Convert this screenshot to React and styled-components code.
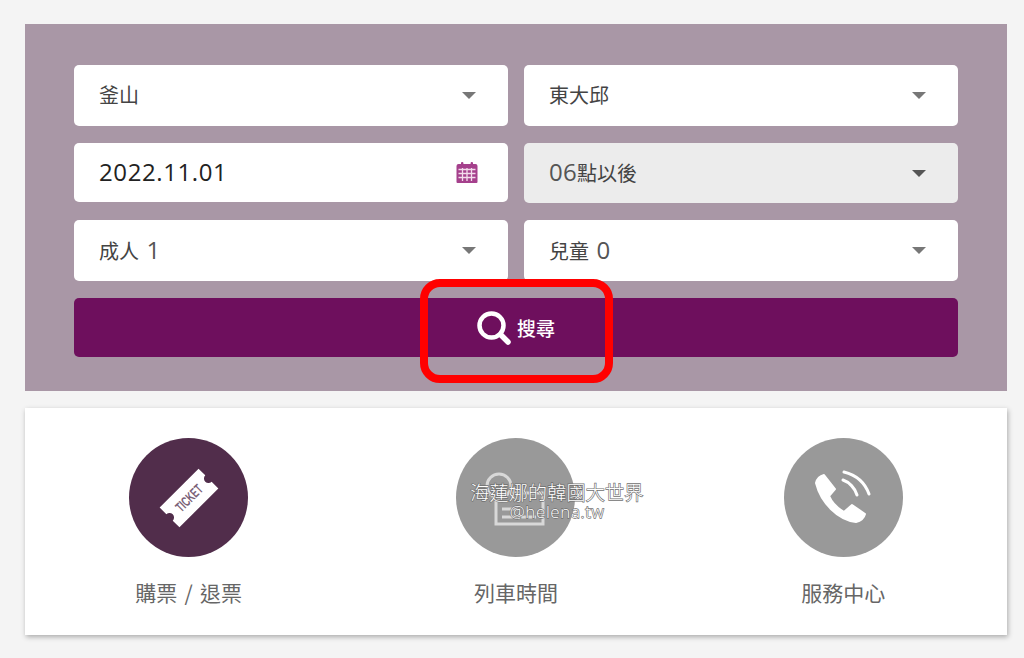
import styled, { createGlobalStyle } from 'styled-components';

const GlobalStyle = createGlobalStyle`
  html, body {
    margin: 0;
    background: #f4f4f4;
    font-family: "Noto Sans CJK TC", sans-serif;
  }
`;

const rows = [
  [{ label: '釜山' }, { label: '東大邱' }],
  [{ label: '2022.11.01', date: true }, { label: '06點以後', disabled: true }],
  [{ label: '成人 1' }, { label: '兒童 0' }],
];

const menu = [
  { label: '購票 / 退票', active: true, icon: <TicketIcon /> },
  { label: '列車時間', icon: <TimetableIcon /> },
  { label: '服務中心', icon: <PhoneIcon /> },
];

function TicketIcon() {
  return (
    <svg width="74" height="74" viewBox="0 0 74 74">
      <g transform="rotate(-45 37 37)">
        <path
          d="M9.5 23h55v9.5a4.5 4.5 0 0 0 0 9V51h-55v-9.500a4.500 4.500 0 0 0 0-9z"
          fill="#fff"
        />
        <text
          x="37"
          y="42"
          textAnchor="middle"
          fontSize="14"
          fontWeight="700"
          fontFamily="Liberation Sans"
          fill="#7a6277"
          textLength="32"
          lengthAdjust="spacingAndGlyphs"
        >
          TICKET
        </text>
      </g>
    </svg>
  );
}

function TimetableIcon() {
  return (
    <svg width="84" height="84" viewBox="0 0 84 84" fill="none" stroke="#d8d8d8" strokeWidth="3">
      <circle cx="25" cy="30" r="12" />
      <path d="M38 37h31v31H22V45" />
      <path d="M28 53h16M28 61h34" />
    </svg>
  );
}

function PhoneIcon() {
  return (
    <svg width="58" height="58" viewBox="0 0 58 58" fill="none" stroke="#fff">
      <path
        d="M2 14C3 10 6 7 10 6L21 20L15 27C18 34 23 39 30 43L38 36L51 45C50 49 46 52 42 53C24 51 7 34 2 14Z"
        fill="#fff"
        strokeWidth="2"
        strokeLinejoin="round"
      />
      <path d="M29 11C35 13 41 19 43 26" strokeWidth="3" strokeLinecap="round" />
      <path d="M30 3C42 6 51 14 55 25" strokeWidth="3" strokeLinecap="round" />
    </svg>
  );
}

function SearchIcon() {
  return (
    <svg width="34" height="34" viewBox="0 0 34 34" fill="none" stroke="#fff">
      <circle cx="14.500" cy="14.500" r="12" strokeWidth="4.500" />
      <path d="M23.500 23.500l7.500 7.500" strokeWidth="5.500" strokeLinecap="round" />
    </svg>
  );
}

function CalendarIcon() {
  return (
    <svg width="22" height="21" viewBox="0 0 22 21">
      <path d="M0.500 4a2 2 0 0 1 2-2h17a2 2 0 0 1 2 2v16a1 1 0 0 1-1 1H1.500a1 1 0 0 1-1-1z" fill="#a5408c" />
      <rect x="5" y="0" width="2.400" height="4.500" rx="1" fill="#a5408c" />
      <rect x="14.600" y="0" width="2.400" height="4.500" rx="1" fill="#a5408c" />
      <path d="M2.500 7.500h17M2.500 11.500h17M2.500 15.500h17M6.500 6v13M11 6v13M15.500 6v13" stroke="#f3dcec" strokeWidth="1.300" />
    </svg>
  );
}

// the numbers in the reference are set larger than the CJK around them
const withNumbers = (label, date) =>
  label.split(/(\d[\d.]*)/).map((part, i) =>
    i % 2 ? (
      <Num key={i} $date={date}>
        {part}
      </Num>
    ) : (
      part
    )
  );

const App = () => (
  <Page>
    <GlobalStyle />
    <SearchPanel>
      {rows.map((row, i) => (
        <FieldRow key={i} $tall={i !== 1}>
          {row.map(field => (
            <Field key={field.label} $disabled={field.disabled} $date={field.date}>
              <FieldText>{withNumbers(field.label, field.date)}</FieldText>
              {field.date ? <CalendarIcon /> : <Caret $dark={field.disabled} />}
            </Field>
          ))}
        </FieldRow>
      ))}
      <SearchButton>
        <SearchIcon />
        <span>搜尋</span>
      </SearchButton>
    </SearchPanel>
    <MenuCard>
      {menu.map(item => (
        <MenuItem key={item.label}>
          <MenuCircle $active={item.active}>{item.icon}</MenuCircle>
          <MenuLabel>{item.label}</MenuLabel>
        </MenuItem>
      ))}
    </MenuCard>
    <Highlight />
    <Watermark>
      <WatermarkTitle>海蓮娜的韓國大世界</WatermarkTitle>
      <WatermarkHandle>@helena.tw</WatermarkHandle>
    </Watermark>
  </Page>
);

export default App;

const Page = styled.div`
  position: relative;
  width: 1024px;
  height: 658px;
  box-sizing: border-box;
  padding: 24px 17px 0 25px;
  overflow: hidden;
`;

const SearchPanel = styled.div`
  display: flex;
  flex-direction: column;
  gap: 17px;
  height: 367px;
  box-sizing: border-box;
  padding: 41px 49px 0;
  background: #a997a6;
`;

const FieldRow = styled.div`
  display: grid;
  grid-template-columns: 434px 434px;
  gap: 16px;
  align-items: start;
  height: ${p => (p.$tall ? '61px' : '60px')};
`;

const Field = styled.div`
  display: flex;
  align-items: center;
  justify-content: space-between;
  height: ${p => (p.$date ? '59px' : '100%')};
  box-sizing: border-box;
  padding: 0 30px 0 25px;
  border-radius: 5px;
  background: ${p => (p.$disabled ? '#ececec' : '#fff')};
`;

const FieldText = styled.span`
  padding-bottom: 2px;
  font-size: 20px;
  line-height: 1;
  word-spacing: 3px;
  color: #444;
`;

const Num = styled.span`
  font-family: "Open Sans", sans-serif;
  font-size: 24px;
  letter-spacing: ${p => (p.$date ? '0.6px' : '0.3px')};
  color: ${p => (p.$date ? '#222' : '#555')};
`;

const Caret = styled.span`
  width: 0;
  height: 0;
  margin-right: 2px;
  border-left: 7px solid transparent;
  border-right: 7px solid transparent;
  border-top: 7px solid ${p => (p.$dark ? '#555' : '#777')};
`;

const SearchButton = styled.div`
  display: flex;
  align-items: center;
  justify-content: center;
  gap: 6px;
  height: 59px;
  border-radius: 5px;
  background: #6e0f5d;
  color: #fff;
  font-size: 19px;
  font-weight: 500;
`;

const MenuCard = styled.div`
  display: grid;
  grid-template-columns: repeat(3, 1fr);
  height: 227px;
  margin-top: 17px;
  padding-top: 30px;
  box-sizing: border-box;
  background: #fff;
  box-shadow: 1px 2px 5px rgba(0, 0, 0, 0.3);
`;

const MenuItem = styled.div`
  display: flex;
  flex-direction: column;
  align-items: center;
  gap: 19px;
`;

const MenuCircle = styled.div`
  display: flex;
  align-items: center;
  justify-content: center;
  width: 119px;
  height: 119px;
  border-radius: 50%;
  background: ${p => (p.$active ? '#512d4b' : '#999')};
`;

const MenuLabel = styled.div`
  font-size: 21px;
  line-height: 32px;
  word-spacing: 2.5px;
  color: #666;
`;

const Highlight = styled.div`
  position: absolute;
  left: 420px;
  top: 279px;
  width: 193px;
  height: 104px;
  box-sizing: border-box;
  border: 8px solid #ff0000;
  border-radius: 20px;
`;

const Watermark = styled.div`
  position: absolute;
  left: 470px;
  top: 480px;
  width: 174px;
  display: flex;
  flex-direction: column;
  align-items: center;
  color: #fff;
  -webkit-text-stroke: 1.3px #707070;
  paint-order: stroke fill;
`;

const WatermarkTitle = styled.div`
  font-size: 19px;
  font-weight: 300;
  line-height: 23px;
  letter-spacing: 0.25px;
  white-space: nowrap;
`;

const WatermarkHandle = styled.div`
  font-family: "Open Sans", sans-serif;
  font-size: 17px;
  font-weight: 300;
  line-height: 17px;
  letter-spacing: 0.6px;
`;
